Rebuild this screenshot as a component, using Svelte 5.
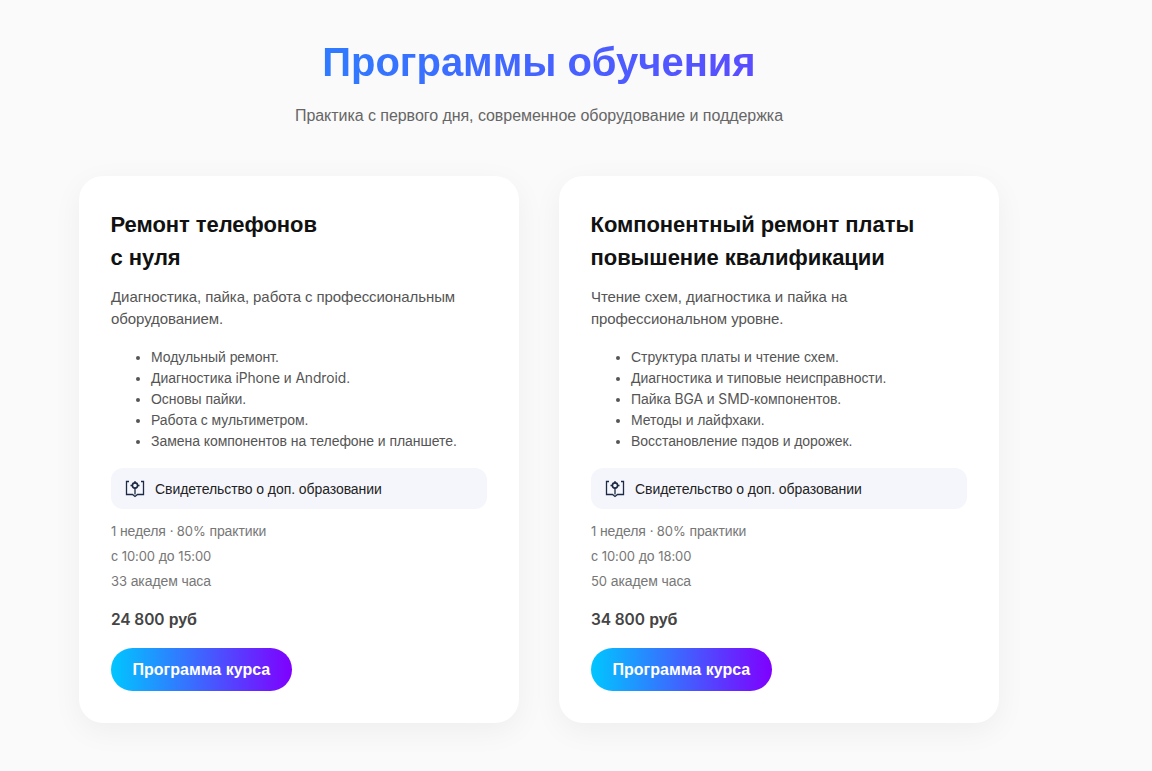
<script>
	const courses = [
		{
			title: ['Ремонт телефонов', 'с нуля'],
			lead: 'Диагностика, пайка, работа с профессиональным оборудованием.',
			topics: [
				'Модульный ремонт.',
				'Диагностика iPhone и Android.',
				'Основы пайки.',
				'Работа с мультиметром.',
				'Замена компонентов на телефоне и планшете.'
			],
			meta: ['1 неделя · 80% практики', 'с 10:00 до 15:00', '33 академ часа'],
			price: '24 800 руб'
		},
		{
			title: ['Компонентный ремонт платы', 'повышение квалификации'],
			lead: 'Чтение схем, диагностика и пайка на профессиональном уровне.',
			topics: [
				'Структура платы и чтение схем.',
				'Диагностика и типовые неисправности.',
				'Пайка BGA и SMD-компонентов.',
				'Методы и лайфхаки.',
				'Восстановление пэдов и дорожек.'
			],
			meta: ['1 неделя · 80% практики', 'с 10:00 до 18:00', '50 академ часа'],
			price: '34 800 руб'
		}
	];

	// latin letters and digits come from another face than the cyrillic text
	function pieces(text) {
		return text.split(/([0-9A-Za-z%:·]+(?: [0-9]+)*)/).filter(Boolean);
	}
	const isLatin = (s) => /^[0-9A-Za-z%:·]/.test(s);
</script>

{#snippet mixed(text)}
	{#each pieces(text) as part}{#if isLatin(part)}<span class="latin">{part}</span>{:else}{part}{/if}{/each}
{/snippet}

<section class="programs">
	<h1>Программы обучения</h1>
	<p class="subtitle">Практика с первого дня, современное оборудование и поддержка</p>

	<div class="cards">
		{#each courses as course}
			<article class="card">
				<h2>{course.title[0]}<br />{course.title[1]}</h2>
				<p class="lead">{course.lead}</p>
				<ul>
					{#each course.topics as topic}
						<li>{@render mixed(topic)}</li>
					{/each}
				</ul>
				<div class="certificate">
					<svg width="20" height="18" viewBox="0 0 20 18" fill="none" stroke="#1c2a44" stroke-width="1.3">
						<path d="M4 1.5H1.5V14.5H7.5L10 16.5L12.5 14.5H18.5V1.5H16" />
						<path d="M10 14.5V10" />
						<circle cx="10" cy="5.5" r="2.6" stroke-width="1.6" />
						<path d="M10 1V3M10 8V10M5.5 5.5H7.5M12.5 5.5H14.5" />
					</svg>
					<span>Свидетельство о доп. образовании</span>
				</div>
				<div class="meta">
					{#each course.meta as line}
						<div>{@render mixed(line)}</div>
					{/each}
				</div>
				<div class="price">{@render mixed(course.price)}</div>
				<button type="button">Программа курса</button>
			</article>
		{/each}
	</div>
</section>

<style>
	:global(body) {
		background: #fafafa;
	}

	.programs {
		width: 1078px;
		padding: 36px 0 48px;
		font-family: 'Liberation Sans', Arial, sans-serif;
		text-align: center;
	}

	.latin {
		font-family: Inter, 'Liberation Sans', sans-serif;
		font-size: 0.93em;
		line-height: 1;
	}

	h1 {
		margin: 0;
		display: inline-block;
		font-size: 40px;
		line-height: 52px;
		font-weight: 700;
		letter-spacing: -0.03px;
		background: linear-gradient(90deg, #2f7bff, #5a4dff);
		-webkit-background-clip: text;
		background-clip: text;
		color: transparent;
	}

	.subtitle {
		margin: 17px 0 0;
		font-size: 16px;
		line-height: 22px;
		letter-spacing: -0.05px;
		color: #666;
	}

	.cards {
		display: flex;
		justify-content: center;
		gap: 40px;
		margin-top: 49px;
		text-align: left;
	}

	.card {
		width: 440px;
		box-sizing: border-box;
		padding: 32px;
		background: #fff;
		border-radius: 24px;
		box-shadow: 0 8px 30px rgba(0, 0, 0, 0.05);
	}

	h2 {
		margin: 0 0 0 -0.5px;
		font-size: 22px;
		line-height: 33px;
		font-weight: 700;
		letter-spacing: -0.05px;
		color: #111;
	}

	.lead {
		margin: 12px 0 0;
		font-size: 15px;
		line-height: 22px;
		letter-spacing: -0.08px;
		color: #555;
	}

	ul {
		margin: 17px 0 0;
		padding-left: 40px;
		font-size: 14px;
		line-height: 21px;
		letter-spacing: -0.05px;
		color: #555;
	}

	ul .latin {
		font-size: 13.8px;
	}

	.certificate {
		display: flex;
		align-items: center;
		gap: 10px;
		height: 41px;
		margin-top: 16px;
		padding: 0 14px;
		background: #f5f6fc;
		border-radius: 12px;
		font-size: 14px;
		letter-spacing: -0.07px;
		color: #222;
	}

	.meta {
		margin-top: 10px;
		font-size: 14px;
		line-height: 25px;
		letter-spacing: -0.1px;
		color: #777;
	}

	.price {
		margin-top: 15px;
		font-size: 16px;
		line-height: 22px;
		font-weight: 700;
		letter-spacing: -0.1px;
		color: #444;
	}

	.price .latin {
		font-size: 15.5px;
		font-weight: 600;
	}

	button {
		display: block;
		height: 43px;
		margin-top: 17px;
		padding: 0 21.5px;
		border: 0;
		border-radius: 22px;
		background: linear-gradient(90deg, #00c6ff, #7f00ff);
		font-family: inherit;
		font-size: 16px;
		font-weight: 700;
		color: #fff;
	}
</style>
